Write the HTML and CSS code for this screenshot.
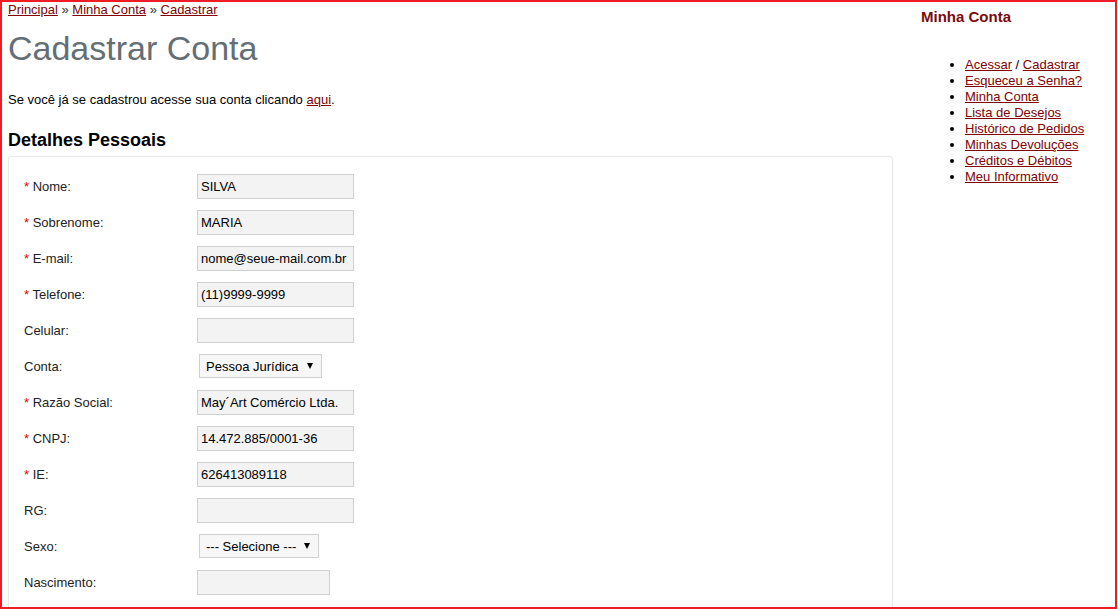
FILE: index.html
```html
<!DOCTYPE html>
<html lang="pt-BR">
<head>
    <meta charset="UTF-8">
    <title>Cadastrar Conta</title>
    <link rel="stylesheet" href="styles.css">
</head>
<body>
    <div class="frame">
        <!-- Conteudo principal -->
        <div class="content">
            <div class="breadcrumb">
                <a href="#">Principal</a> &raquo; <a href="#">Minha Conta</a> &raquo; <a href="#">Cadastrar</a>
            </div>
            <h1>Cadastrar Conta</h1>
            <p class="intro">Se você já se cadastrou acesse sua conta clicando <a href="#">aqui</a>.</p>

            <h2>Detalhes Pessoais</h2>
            <div class="box">
                <div class="form-grid">
                    <label><span class="required">*</span> Nome:</label>
                    <div><input type="text" value="SILVA"></div>

                    <label><span class="required">*</span> Sobrenome:</label>
                    <div><input type="text" value="MARIA"></div>

                    <label><span class="required">*</span> E-mail:</label>
                    <div><input type="text" value="nome@seue-mail.com.br"></div>

                    <label><span class="required">*</span> Telefone:</label>
                    <div><input type="text" value="(11)9999-9999"></div>

                    <label>Celular:</label>
                    <div><input type="text" value=""></div>

                    <label>Conta:</label>
                    <div>
                        <span class="select-wrap conta">
                            <select>
                                <option>Pessoa Física</option>
                                <option selected>Pessoa Jurídica</option>
                            </select>
                        </span>
                    </div>

                    <label><span class="required">*</span> Razão Social:</label>
                    <div><input type="text" value="May´Art Comércio Ltda."></div>

                    <label><span class="required">*</span> CNPJ:</label>
                    <div><input type="text" value="14.472.885/0001-36"></div>

                    <label><span class="required">*</span> IE:</label>
                    <div><input type="text" value="626413089118"></div>

                    <label>RG:</label>
                    <div><input type="text" value=""></div>

                    <label>Sexo:</label>
                    <div>
                        <span class="select-wrap sexo">
                            <select>
                                <option selected>--- Selecione ---</option>
                                <option>Masculino</option>
                                <option>Feminino</option>
                            </select>
                        </span>
                    </div>

                    <label>Nascimento:</label>
                    <div><input type="text" class="short" value=""></div>
                </div>
            </div>
        </div>

        <!-- Coluna da direita -->
        <div class="sidebar">
            <h3>Minha Conta</h3>
            <ul>
                <li><a href="#">Acessar</a> / <a href="#">Cadastrar</a></li>
                <li><a href="#">Esqueceu a Senha?</a></li>
                <li><a href="#">Minha Conta</a></li>
                <li><a href="#">Lista de Desejos</a></li>
                <li><a href="#">Histórico de Pedidos</a></li>
                <li><a href="#">Minhas Devoluções</a></li>
                <li><a href="#">Créditos e Débitos</a></li>
                <li><a href="#">Meu Informativo</a></li>
            </ul>
        </div>
    </div>
</body>
</html>
```

FILE: styles.css
```css
* {
    box-sizing: border-box;
}

body {
    margin: 0;
    background: #fff;
    color: #000;
    font-family: "Liberation Sans", Arial, sans-serif;
    font-size: 13px;
    line-height: 16px;
}

a {
    color: #800000;
    text-decoration: underline;
}

.frame {
    display: flex;
    width: 1117px;
    height: 609px;
    border: 2px solid #ee1c25;
    overflow: hidden;
}

/* Conteudo principal */
.content {
    width: 885px;
    margin-left: 6px;
    flex-shrink: 0;
}

.breadcrumb {
    color: #333;
}

h1 {
    margin: 10px 0 0;
    font-size: 34px;
    line-height: 40px;
    font-weight: normal;
    color: #646e75;
}

.intro {
    margin: 24px 0 0;
}

h2 {
    margin: 21px 0 0;
    font-size: 18px;
    line-height: 22px;
    color: #000;
}

.box {
    margin-top: 5px;
    border: 1px solid #e8e8e8;
    border-radius: 3px;
    padding: 11px 15px 20px;
    height: 600px;
}

.form-grid {
    display: grid;
    grid-template-columns: 173px 1fr;
    grid-auto-rows: 36px;
    align-items: center;
}

.form-grid label {
    padding-top: 2px;
    color: #222;
}

.required {
    color: #e00;
}

input[type="text"] {
    display: block;
    width: 157px;
    height: 25px;
    padding: 1px 3px 0;
    border: 1px solid #cfcfcf;
    background: #f3f3f3;
    font-family: "Liberation Sans", Arial, sans-serif;
    font-size: 13px;
    color: #000;
}

input.short {
    width: 133px;
}

/* Selects */
.select-wrap {
    position: relative;
    display: inline-block;
    margin-left: 2px;
}

.select-wrap::after {
    content: "";
    position: absolute;
    right: 9px;
    top: 9px;
    border-left: 3px solid transparent;
    border-right: 3px solid transparent;
    border-top: 6px solid #000;
    pointer-events: none;
}

.select-wrap select {
    display: block;
    appearance: none;
    -webkit-appearance: none;
    height: 24px;
    padding: 0 20px 0 6px;
    border: 1px solid #d0d0d0;
    border-radius: 0;
    background: #f7f7f7;
    font-family: "Liberation Sans", Arial, sans-serif;
    font-size: 13px;
    color: #000;
}

.conta select {
    width: 123px;
}

.sexo select {
    width: 120px;
}

/* Coluna da direita */
.sidebar {
    flex: 1;
    padding-left: 28px;
}

.sidebar h3 {
    margin: 6px 0 0;
    font-size: 15px;
    line-height: 18px;
    color: #7a0c0c;
}

.sidebar ul {
    margin: 31px 0 0;
    padding-left: 44px;
}
```
